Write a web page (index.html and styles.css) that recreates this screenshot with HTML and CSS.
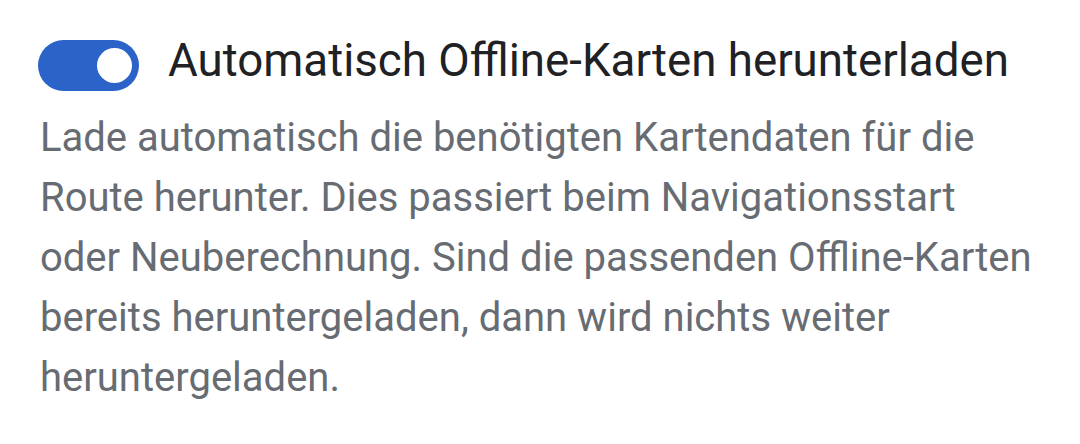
FILE: index.html
```html
<!DOCTYPE html>
<html lang="de">
<head>
    <meta charset="UTF-8">
    <meta name="viewport" content="width=device-width, initial-scale=1.0">
    <title>Offline-Karten</title>
    <link rel="stylesheet" href="styles.css">
</head>
<body>
    <div class="setting">
        <div class="setting-head">
            <span class="toggle on"><span class="knob"></span></span>
            <span class="setting-title">Automatisch Offline-Karten herunterladen</span>
        </div>
        <p class="setting-desc">Lade automatisch die benötigten Kartendaten für die Route herunter. Dies passiert beim Navigationsstart oder Neuberechnung. Sind die passenden Offline-Karten bereits heruntergeladen, dann wird nichts weiter heruntergeladen.</p>
    </div>
</body>
</html>
```

FILE: styles.css
```css
body {
    margin: 0;
    background: #fff;
    font-family: Roboto, "Noto Sans", sans-serif;
}

.setting {
    padding: 35px 0 0 38px;
}

.setting-head {
    display: flex;
    align-items: center;
    gap: 29px;
}

/* switch, on state */
.toggle {
    width: 101px;
    height: 51px;
    border-radius: 26px;
    background-color: #2b63c8;
    display: flex;
    align-items: center;
    justify-content: flex-end;
    padding-right: 7px;
    box-sizing: border-box;
    flex-shrink: 0;
}

.knob {
    width: 35px;
    height: 35px;
    border-radius: 50%;
    background: #fff;
}

.setting-title {
    font-size: 45.7px;
    line-height: 51px;
    margin-bottom: 10px;
    color: #202124;
}

.setting-desc {
    margin: 12px 0 0 2px;
    width: 1002px;
    font-size: 40px;
    line-height: 60px;
    color: #676c73;
}
```
